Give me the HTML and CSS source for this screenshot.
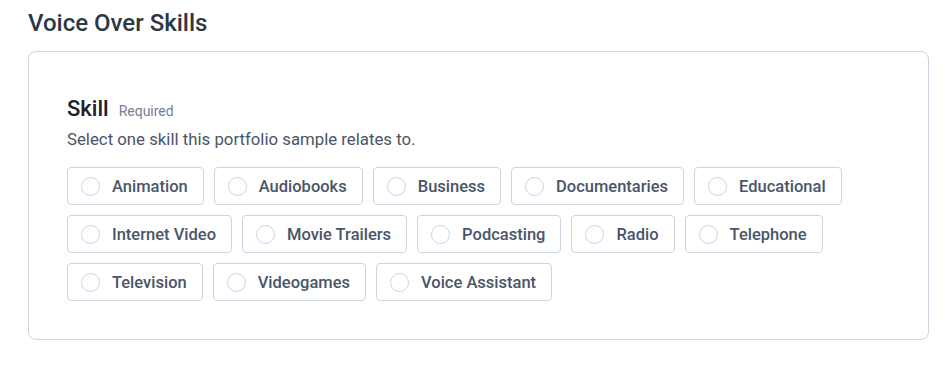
FILE: index.html
```html
<!DOCTYPE html>
<html>
<head>
<meta charset="utf-8">
<link rel="stylesheet" href="styles.css">
</head>
<body>
<div class="page">
  <h2 class="title">Voice Over Skills</h2>
  <div class="card">
    <div class="field-head">
      <span class="label">Skill</span>
      <span class="req">Required</span>
    </div>
    <p class="desc">Select one skill this portfolio sample relates to.</p>
    <div class="options">
      <label class="chip"><span class="radio"></span>Animation</label>
      <label class="chip"><span class="radio"></span>Audiobooks</label>
      <label class="chip"><span class="radio"></span>Business</label>
      <label class="chip"><span class="radio"></span>Documentaries</label>
      <label class="chip"><span class="radio"></span>Educational</label>
      <label class="chip"><span class="radio"></span>Internet Video</label>
      <label class="chip"><span class="radio"></span>Movie Trailers</label>
      <label class="chip"><span class="radio"></span>Podcasting</label>
      <label class="chip"><span class="radio"></span>Radio</label>
      <label class="chip"><span class="radio"></span>Telephone</label>
      <label class="chip"><span class="radio"></span>Television</label>
      <label class="chip"><span class="radio"></span>Videogames</label>
      <label class="chip"><span class="radio"></span>Voice Assistant</label>
    </div>
  </div>
</div>
</body>
</html>
```
FILE: styles.css
```css
* { box-sizing: border-box; }
body {
  margin: 0;
  background: #fff;
  font-family: Roboto, "Liberation Sans", sans-serif;
}
.page {
  padding: 9px 23px 0 28px;
}
.title {
  margin: 0 0 14px;
  font-size: 24px;
  line-height: 28px;
  font-weight: 500;
  color: #2d3748;
}
.card {
  border: 1px solid #cbd5e0;
  border-radius: 8px;
  padding: 44px 38px 37px;
  height: 289px;
}
.field-head {
  display: flex;
  align-items: baseline;
  gap: 10px;
}
.label {
  font-size: 22px;
  line-height: 26px;
  font-weight: 500;
  color: #1a202c;
}
.req {
  font-size: 14px;
  color: #718096;
}
.desc {
  margin: 6px 0 17px;
  font-size: 16.8px;
  line-height: 22px;
  color: #4a5568;
}
.options {
  display: flex;
  flex-wrap: wrap;
  gap: 10px;
}
.chip {
  display: flex;
  align-items: center;
  height: 38px;
  padding: 0 15px 0 13px;
  border: 1px solid #cbd5e0;
  border-radius: 4px;
  font-size: 16.5px;
  font-weight: 500;
  color: #4a5568;
}
.radio {
  width: 19px;
  height: 19px;
  border: 1px solid #cbd5e0;
  border-radius: 50%;
  margin-right: 12px;
}
```
